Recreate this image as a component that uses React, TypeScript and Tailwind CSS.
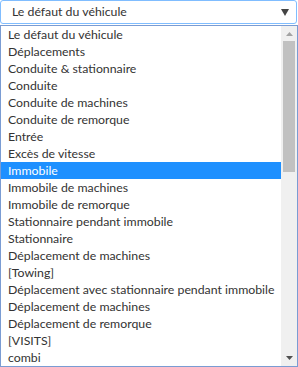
import React from "react";

const items = [
  "Le défaut du véhicule",
  "Déplacements",
  "Conduite & stationnaire",
  "Conduite",
  "Conduite de machines",
  "Conduite de remorque",
  "Entrée",
  "Excès de vitesse",
  "Immobile",
  "Immobile de machines",
  "Immobile de remorque",
  "Stationnaire pendant immobile",
  "Stationnaire",
  "Déplacement de machines",
  "[Towing]",
  "Déplacement avec stationnaire pendant immobile",
  "Déplacement de machines",
  "Déplacement de remorque",
  "[VISITS]",
  "combi",
];

export default function App() {
  return (
    <div
      className="w-[298px] h-[367px] bg-white text-[12.3px] text-[#333] overflow-hidden"
      style={{ fontFamily: 'Lato, "Noto Sans", sans-serif' }}
    >
      <div className="mr-[1px] h-[24px] border border-[#80bdff] rounded-[3px] flex items-center pl-[11px] pr-[7px]">
        <span className="flex-1 leading-[22px] whitespace-nowrap">Le défaut du véhicule</span>
        <svg width="8" height="7" viewBox="0 0 8 7" className="mt-[1px]">
          <path d="M0 0 H8 L4 7 Z" fill="#444" />
        </svg>
      </div>
      <div className="mt-[1px] h-[342px] border border-[#7a9cd3] flex">
        <div className="flex-1 min-w-0 overflow-hidden flex flex-col">
          {items.map((t, i) => (
            <div
              key={i}
              className={
                "h-[17px] leading-[17px] pl-[7px] whitespace-nowrap " +
                (i === 8 ? "bg-[#1e90ff] text-white" : "")
              }
            >
              {t}
            </div>
          ))}
        </div>
        <div className="w-[16px] shrink-0 bg-[#f0f0f0] flex flex-col">
          <div className="h-[15px] flex items-center justify-center">
            <svg width="7" height="4" viewBox="0 0 7 4">
              <path d="M0 4 L3.5 0 L7 4 Z" fill="#a3a3a3" />
            </svg>
          </div>
          <div className="mx-[2px] h-[131px] bg-[#c1c1c1]" />
          <div className="flex-1" />
          <div className="h-[17px] flex items-center justify-center">
            <svg width="7" height="4" viewBox="0 0 7 4">
              <path d="M0 0 H7 L3.5 4 Z" fill="#505050" />
            </svg>
          </div>
        </div>
      </div>
    </div>
  );
}
